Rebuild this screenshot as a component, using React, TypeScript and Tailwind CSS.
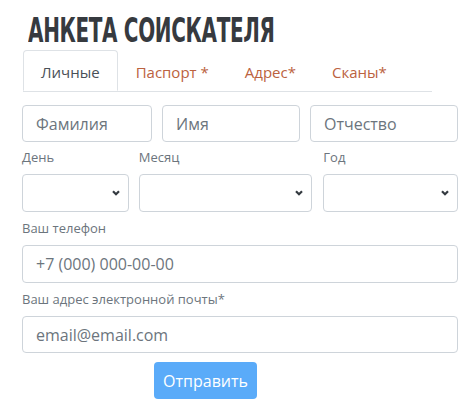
import React from "react";

const Chevron = () => (
  <svg width="8" height="6" viewBox="0 0 8 6" className="shrink-0">
    <path d="M1 1.2 L4 4.2 L7 1.2" fill="none" stroke="#343a40" strokeWidth="2.2" />
  </svg>
);

const Input = ({ ph, w }: { ph: string; w: string }) => (
  <div
    className={`${w} h-[37px] border border-[#ced4da] rounded-[4px] bg-white flex items-center pl-[13px] text-[16px] text-[#6c757d]`}
  >
    {ph}
  </div>
);

const Select = ({ label, w, extra = "" }: { label: string; w: string; extra?: string }) => (
  <div className={`${w} ${extra} flex flex-col`}>
    <div className="text-[13px] leading-[18px] text-[#6c757d]">{label}</div>
    <div className="mt-[8px] h-[38px] border border-[#ced4da] rounded-[4px] bg-white flex items-center justify-end pr-[8px]">
      <Chevron />
    </div>
  </div>
);

export default function App() {
  return (
    <div
      className="w-[473px] h-[404px] bg-white overflow-hidden pl-[22px]"
      style={{ fontFamily: '"Open Sans", "Noto Sans", sans-serif' }}
    >
      <h1
        className="mt-[16px] ml-[6px] h-[30px] text-[33px] leading-[30px] font-bold text-[#363a3f] tracking-[-0.5px] whitespace-nowrap origin-left scale-x-[0.673]"
        style={{ fontFamily: '"Liberation Sans Narrow", "DejaVu Sans Condensed", sans-serif' }}
      >
        АНКЕТА СОИСКАТЕЛЯ
      </h1>
      <div className="mt-[4px] ml-px w-[409px] flex border-b border-[#dee2e6] text-[15px]">
        <div className="-mb-px h-[41px] px-[17px] flex items-center pt-[3px] border border-[#dee2e6] border-b-white rounded-t-[4px] bg-white text-[#495057]">
          Личные
        </div>
        <div className="h-[41px] px-[18px] flex items-center pt-[3px] text-[#bb6240]">Паспорт *</div>
        <div className="h-[41px] px-[18px] flex items-center pt-[3px] text-[#bb6240]">Адрес*</div>
        <div className="h-[41px] px-[18px] flex items-center pt-[3px] text-[#bb6240]">Сканы*</div>
      </div>
      <div className="w-[436px]">
        <div className="mt-[13px] flex gap-[10px]">
          <Input ph="Фамилия" w="w-[130px]" />
          <Input ph="Имя" w="w-[138px]" />
          <Input ph="Отчество" w="w-[148px]" />
        </div>
        <div className="mt-[6px] flex gap-[10px]">
          <Select label="День" w="w-[107px]" />
          <Select label="Месяц" w="w-[174px]" />
          <Select label="Год" w="w-[135px]" extra="ml-px" />
        </div>
        <div className="mt-[7px] text-[13px] leading-[18px] text-[#6c757d]">Ваш телефон</div>
        <div className="mt-[8px]">
          <Input ph="+7 (000) 000-00-00" w="w-[436px] h-[38px]" />
        </div>
        <div className="mt-[7px] text-[13px] leading-[18px] text-[#6c757d]">
          Ваш адрес электронной почты*
        </div>
        <div className="mt-[8px]">
          <Input ph="email@email.com" w="w-[436px]" />
        </div>
        <div className="mt-[9px] ml-[132px] w-[103px] h-[37px] rounded-[4px] bg-[#5aabf9] text-white text-[16px] flex items-center justify-center">
          Отправить
        </div>
      </div>
    </div>
  );
}
